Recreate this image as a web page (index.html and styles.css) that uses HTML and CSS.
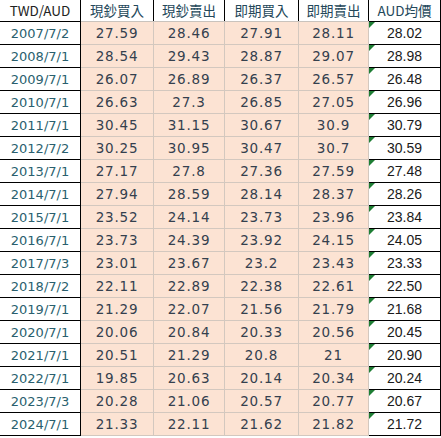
FILE: index.html
```
<!DOCTYPE html>
<html>
<head>
<meta charset="utf-8">
<link rel="stylesheet" href="styles.css">
</head>
<body>
<table class="sheet">
<colgroup><col class="c1"><col class="c2"><col class="c3"><col class="c4"><col class="c5"><col class="c6"></colgroup>
<thead>
<tr><th class="h-first">TWD/AUD</th><th>現鈔買入</th><th>現鈔賣出</th><th>即期買入</th><th>即期賣出</th><th class="h-last">AUD均價</th></tr>
</thead>
<tbody>
<tr><td class="date">2007/7/2</td><td class="num">27.59</td><td class="num">28.46</td><td class="num">27.91</td><td class="num">28.11</td><td class="avg">28.02</td></tr>
<tr><td class="date">2008/7/1</td><td class="num">28.54</td><td class="num">29.43</td><td class="num">28.87</td><td class="num">29.07</td><td class="avg">28.98</td></tr>
<tr><td class="date">2009/7/1</td><td class="num">26.07</td><td class="num">26.89</td><td class="num">26.37</td><td class="num">26.57</td><td class="avg">26.48</td></tr>
<tr><td class="date">2010/7/1</td><td class="num">26.63</td><td class="num">27.3</td><td class="num">26.85</td><td class="num">27.05</td><td class="avg">26.96</td></tr>
<tr><td class="date">2011/7/1</td><td class="num">30.45</td><td class="num">31.15</td><td class="num">30.67</td><td class="num">30.9</td><td class="avg">30.79</td></tr>
<tr><td class="date">2012/7/2</td><td class="num">30.25</td><td class="num">30.95</td><td class="num">30.47</td><td class="num">30.7</td><td class="avg">30.59</td></tr>
<tr><td class="date">2013/7/1</td><td class="num">27.17</td><td class="num">27.8</td><td class="num">27.36</td><td class="num">27.59</td><td class="avg">27.48</td></tr>
<tr><td class="date">2014/7/1</td><td class="num">27.94</td><td class="num">28.59</td><td class="num">28.14</td><td class="num">28.37</td><td class="avg">28.26</td></tr>
<tr><td class="date">2015/7/1</td><td class="num">23.52</td><td class="num">24.14</td><td class="num">23.73</td><td class="num">23.96</td><td class="avg">23.84</td></tr>
<tr><td class="date">2016/7/1</td><td class="num">23.73</td><td class="num">24.39</td><td class="num">23.92</td><td class="num">24.15</td><td class="avg">24.05</td></tr>
<tr><td class="date">2017/7/3</td><td class="num">23.01</td><td class="num">23.67</td><td class="num">23.2</td><td class="num">23.43</td><td class="avg">23.33</td></tr>
<tr><td class="date">2018/7/2</td><td class="num">22.11</td><td class="num">22.89</td><td class="num">22.38</td><td class="num">22.61</td><td class="avg">22.50</td></tr>
<tr><td class="date">2019/7/1</td><td class="num">21.29</td><td class="num">22.07</td><td class="num">21.56</td><td class="num">21.79</td><td class="avg">21.68</td></tr>
<tr><td class="date">2020/7/1</td><td class="num">20.06</td><td class="num">20.84</td><td class="num">20.33</td><td class="num">20.56</td><td class="avg">20.45</td></tr>
<tr><td class="date">2021/7/1</td><td class="num">20.51</td><td class="num">21.29</td><td class="num">20.8</td><td class="num">21</td><td class="avg">20.90</td></tr>
<tr><td class="date">2022/7/1</td><td class="num">19.85</td><td class="num">20.63</td><td class="num">20.14</td><td class="num">20.34</td><td class="avg">20.24</td></tr>
<tr><td class="date">2023/7/3</td><td class="num">20.28</td><td class="num">21.06</td><td class="num">20.57</td><td class="num">20.77</td><td class="avg">20.67</td></tr>
<tr><td class="date">2024/7/1</td><td class="num">21.33</td><td class="num">22.11</td><td class="num">21.62</td><td class="num">21.82</td><td class="avg">21.72</td></tr>
</tbody>
</table>
</body>
</html>
```
FILE: styles.css
```
html, body {
  margin: 0;
  padding: 0;
  background: #ffffff;
}
.sheet {
  border-collapse: collapse;
  table-layout: fixed;
  width: 441px;
  margin-left: -1px;
  margin-top: -1px;
}
.c1 { width: 81px; }
.c2 { width: 73px; }
.c3 { width: 71px; }
.c4 { width: 74px; }
.c5 { width: 70px; }
.c6 { width: 72px; }
.sheet th {
  height: 21px;
  padding: 0;
  font-family: "Noto Sans CJK TC", "Noto Sans", sans-serif;
  font-weight: normal;
  font-size: 13.5px;
  line-height: 1;
  color: #24485a;
  background: #ffffff;
  border: 1px solid #000000;
  border-bottom: 1px solid #c9c3bd;
  text-align: center;
  vertical-align: middle;
}
.sheet th.h-first {
  font-size: 13.5px;
  color: #222222;
  border-bottom: 1px solid #000000;
}
.sheet th.h-last {
  border-bottom: 1px solid #000000;
}
.sheet td {
  height: 22px;
  padding: 0;
  text-align: center;
  vertical-align: middle;
}
.date {
  font-family: "DejaVu Sans", sans-serif;
  font-size: 13px;
  color: #2a5f6e;
  border: 1px solid #000000;
}
.num {
  font-family: "DejaVu Sans", sans-serif;
  font-size: 13.5px;
  letter-spacing: 0.8px;
  color: #34404e;
  background: #fce3d3;
  border: 1px solid #d3c8bf;
}
.avg {
  position: relative;
  font-family: "Liberation Sans", sans-serif;
  font-size: 14px;
  color: #1a1a1a;
  background: #ffffff;
  border: 1px solid #000000;
}
.avg::before {
  content: "";
  position: absolute;
  left: 0;
  top: 0;
  width: 0;
  height: 0;
  border-top: 6px solid #1e7e34;
  border-right: 6px solid transparent;
}
```
